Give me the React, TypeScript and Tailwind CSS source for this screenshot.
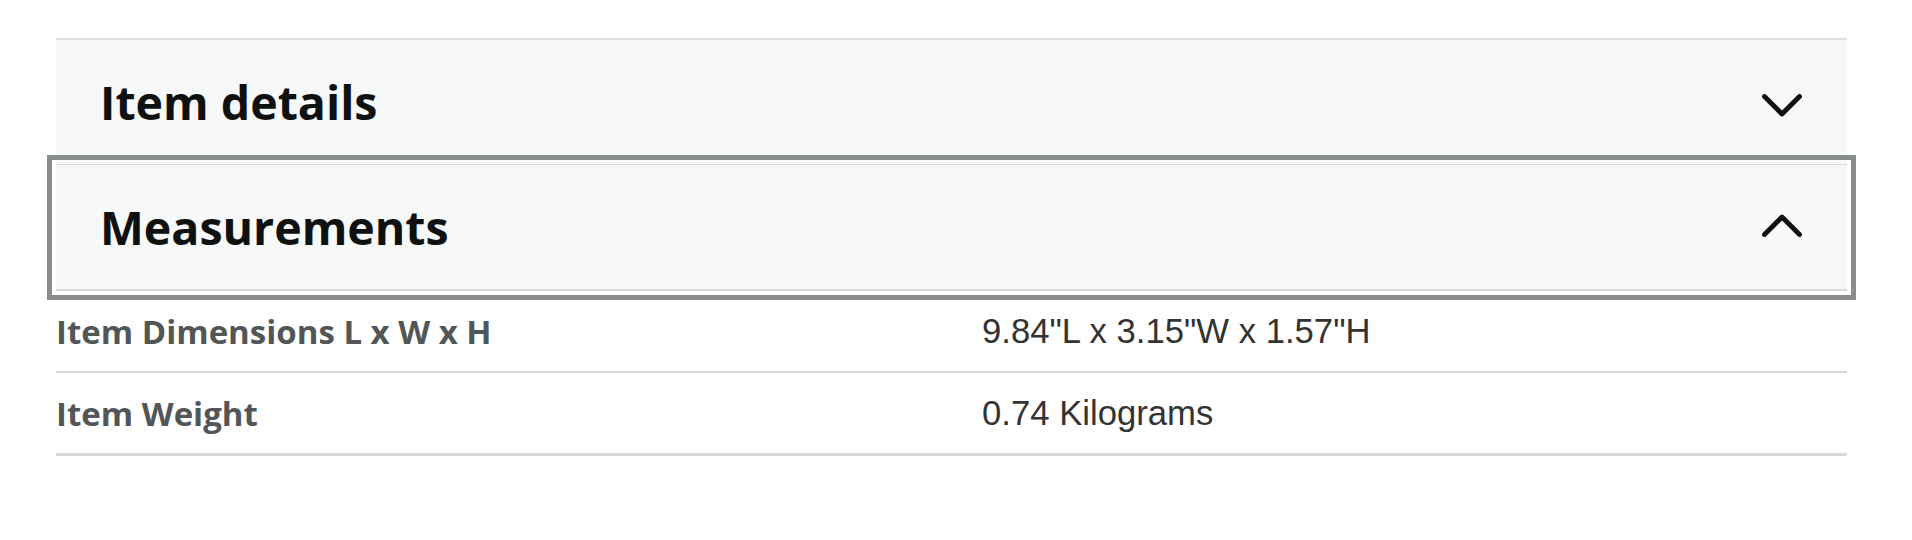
import React from "react";

function Chevron({ up }: { up?: boolean }) {
  return (
    <svg width="40" height="23" viewBox="0 0 40 23" fill="none" className={up ? "-mt-[3px]" : "mt-[7px]"}>
      <path
        d={up ? "M2.5 20.5 L20 3 L37.5 20.5" : "M2.5 2.5 L20 20 L37.5 2.5"}
        stroke="#0f1111"
        strokeWidth="4.8"
        strokeLinecap="round"
        strokeLinejoin="round"
      />
    </svg>
  );
}

const rows = [
  { label: "Item Dimensions L x W x H", value: '9.84"L x 3.15"W x 1.57"H' },
  { label: "Item Weight", value: "0.74 Kilograms" },
];

export default function App() {
  return (
    <div className="min-h-[540px] bg-white pt-[38px]" style={{ fontFamily: '"Open Sans", sans-serif' }}>
      <div className="ml-[56px] w-[1791px]">
        {/* collapsed section */}
        <button className="flex h-[126px] w-full items-center justify-between border-t-2 border-[#dcdfdf] bg-[#f7f8f8] pl-[44px] pr-[45px] text-left">
          <span className="text-[46.5px] font-bold leading-none text-[#0f1111]">Item details</span>
          <Chevron />
        </button>

        {/* expanded section, keyboard focused */}
        <button className="flex h-[127px] w-full items-center justify-between border-t border-b-2 border-[#d5d9d9] bg-[#f7f8f8] pl-[44px] pr-[45px] text-left outline-[5px] outline-solid outline-[#888c8c] outline-offset-[4px]">
          <span className="text-[46.5px] font-bold leading-none text-[#0f1111]">Measurements</span>
          <Chevron up />
        </button>

        <div className="mt-[1px]">
          {rows.map((r, i) => (
            <div
              key={r.label}
              className={
                "grid grid-cols-[926px_1fr] items-center " +
                (i === rows.length - 1
                  ? "h-[83px] border-b-[3px] border-[#d5d9d9]"
                  : "h-[81px] border-b-2 border-[#d5d9d9]")
              }
            >
              <span className="text-[33px] font-bold leading-none text-[#535656]">{r.label}</span>
              <span
                className="text-[34.7px] leading-none text-[#333333]"
                style={{ fontFamily: '"Liberation Sans", Arial, sans-serif' }}
              >
                {r.value}
              </span>
            </div>
          ))}
        </div>
      </div>
    </div>
  );
}
